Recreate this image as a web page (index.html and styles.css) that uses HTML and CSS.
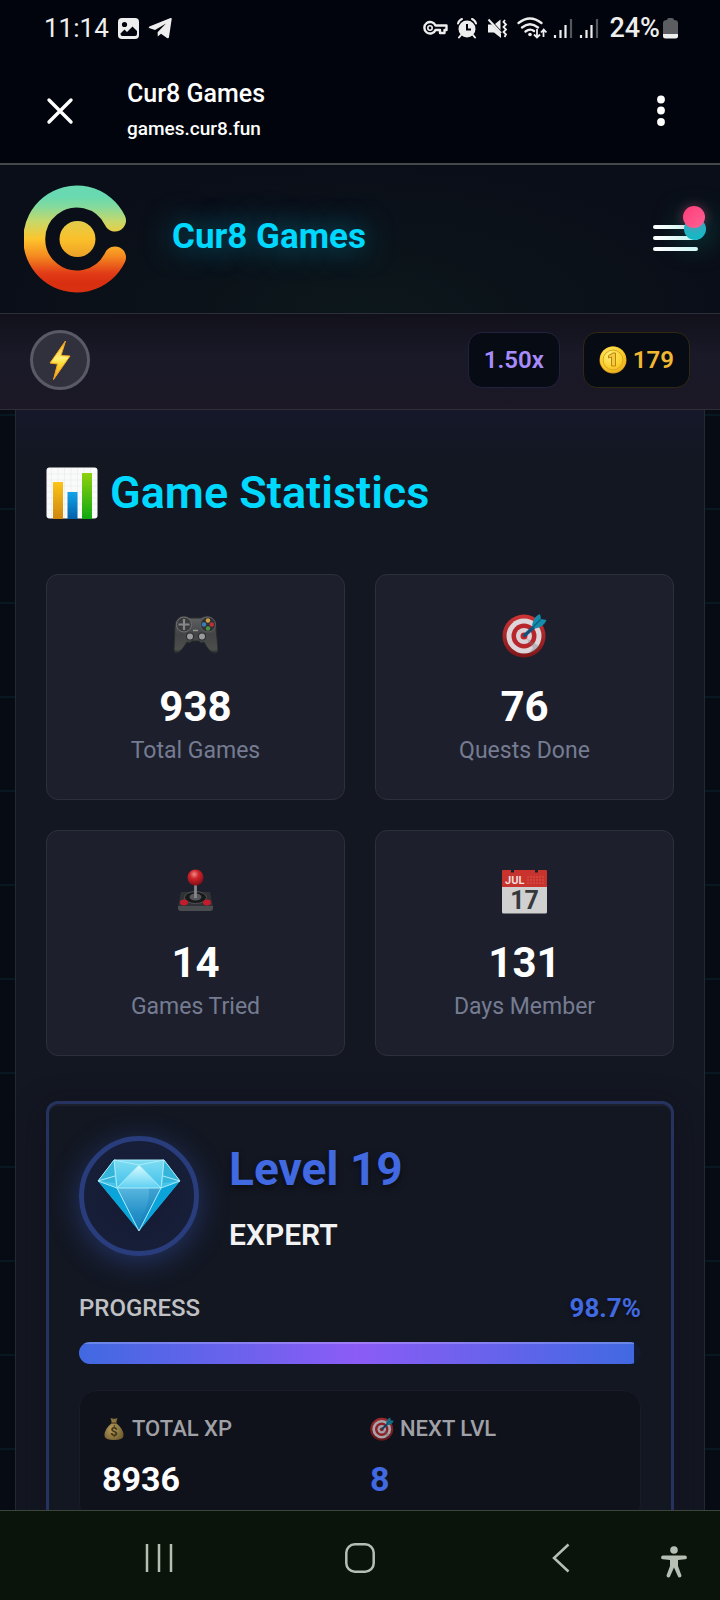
FILE: index.html
```html
<!DOCTYPE html>
<html lang="en">
<head>
<meta charset="utf-8">
<meta name="viewport" content="width=device-width, initial-scale=1">
<title>Cur8 Games</title>
<link rel="stylesheet" href="styles.css">
</head>
<body>
<svg class="defs" width="0" height="0" aria-hidden="true">
  <defs>
    <linearGradient id="logoG" x1="0" y1="0" x2="0" y2="1"><stop offset="0" stop-color="#68d9b0"/><stop offset=".12" stop-color="#84da9c"/><stop offset=".3" stop-color="#c9d868"/><stop offset=".5" stop-color="#fdc52c"/><stop offset=".7" stop-color="#f58a20"/><stop offset=".9" stop-color="#e23c17"/><stop offset="1" stop-color="#d93012"/></linearGradient>
    <linearGradient id="dotG" x1="0" y1="0" x2="0" y2="1"><stop offset="0" stop-color="#e2cc4c"/><stop offset=".5" stop-color="#fbc02a"/><stop offset="1" stop-color="#eda128"/></linearGradient>
    <linearGradient id="boltG" x1="0" y1="0" x2="0" y2="1"><stop offset="0" stop-color="#f9b424"/><stop offset=".45" stop-color="#fff176"/><stop offset=".6" stop-color="#fdd835"/><stop offset="1" stop-color="#f59a1c"/></linearGradient>
    <linearGradient id="yellowG" x1="0" y1="0" x2="0" y2="1"><stop offset="0" stop-color="#fcc417"/><stop offset="1" stop-color="#d0850e"/></linearGradient>
    <linearGradient id="blueG" x1="0" y1="0" x2="0" y2="1"><stop offset="0" stop-color="#12a4ea"/><stop offset="1" stop-color="#045fa8"/></linearGradient>
    <linearGradient id="greenG" x1="0" y1="0" x2="0" y2="1"><stop offset="0" stop-color="#8fd010"/><stop offset="1" stop-color="#10a810"/></linearGradient>
    <linearGradient id="padG" x1="0" y1="0" x2="0" y2="1"><stop offset="0" stop-color="#626364"/><stop offset=".5" stop-color="#434445"/><stop offset=".9" stop-color="#4c4e4c"/><stop offset="1" stop-color="#252628"/></linearGradient>
    <linearGradient id="redG" x1="0" y1="0" x2="0" y2="1"><stop offset="0" stop-color="#cf3434"/><stop offset="1" stop-color="#80161a"/></linearGradient>
    <radialGradient id="ballG" cx=".42" cy=".3" r=".7"><stop offset="0" stop-color="#ef8a86"/><stop offset=".4" stop-color="#cf2429"/><stop offset="1" stop-color="#820d18"/></radialGradient>
    <radialGradient id="coinG" cx=".4" cy=".35" r=".75"><stop offset="0" stop-color="#fff27a"/><stop offset=".6" stop-color="#fbcf2c"/><stop offset="1" stop-color="#e9a81c"/></radialGradient>
    <radialGradient id="bagG" cx=".4" cy=".5" r=".7"><stop offset="0" stop-color="#b39e62"/><stop offset="1" stop-color="#6b5526"/></radialGradient>
    <linearGradient id="gemG" x1="0" y1="0" x2="0" y2="1"><stop offset="0" stop-color="#7fdcf2"/><stop offset=".4" stop-color="#3fc0ea"/><stop offset="1" stop-color="#0a86c4"/></linearGradient>
    <linearGradient id="gemC" x1="0" y1="0" x2="0" y2="1"><stop offset="0" stop-color="#58b6de"/><stop offset=".6" stop-color="#2490c8"/><stop offset="1" stop-color="#157fba"/></linearGradient>
    <linearGradient id="gemT" x1="0" y1="0" x2="0" y2="1"><stop offset="0" stop-color="#d8fbff"/><stop offset="1" stop-color="#5fd0f2"/></linearGradient>
    <symbol id="target" viewBox="0 0 45 45">
      <circle cx="22" cy="23" r="21.5" fill="url(#redG)"/><circle cx="22" cy="23" r="17.5" fill="#dcd6da"/><circle cx="22" cy="23" r="12.5" fill="#b8262c"/><circle cx="22" cy="23" r="8" fill="#d8d2d6"/><circle cx="22" cy="23" r="3.5" fill="#cf2022"/>
      <path d="M24 25 31 35 27 40Q34 39 37 33Z" fill="#777b80" opacity=".35"/>
      <path d="M22.500 22.500 32 14" stroke="#10527e" stroke-width="3.600" stroke-linecap="round"/>
      <path d="M30 12Q32 3 38 1L39 6 44.500 7Q42 14 33 15.500Z" fill="#168cab"/><path d="M30 15 39 6" stroke="#0b5f86" stroke-width="1.500"/>
    </symbol>
    <symbol id="signal" viewBox="0 0 20 22"><path d="M2 18v3M7.500 13v8M12.500 8v13" stroke="#eee" stroke-width="2.200"/><path d="M18 2v19" stroke="#55575b" stroke-width="2.200"/></symbol>
  </defs>
</svg>

<div class="status">
  <div class="status-left">
    <span class="clock">11:14</span>
    <svg width="21" height="21" viewBox="0 0 21 21"><rect width="21" height="21" rx="4" fill="#eee"/><circle cx="6.500" cy="6.500" r="2.600" fill="#01040c"/><path d="M2.500 15.500 6.500 11.500 9 14 14.500 8.500 19 13v3q0 2-2 2H4.500q-2 0-2-2Z" fill="#01040c"/></svg>
    <svg width="24" height="22" viewBox="0 0 24 22"><path d="M1 11Q0 10 2 9.300L22.500 1Q24 .5 23.700 2L21 20Q20.700 22 19 21L13 16.800 9.800 19.500 9.600 15.200 18 6.500 7 13Z" fill="#eee"/></svg>
  </div>
  <div class="status-right">
    <svg class="key" width="25" height="16" viewBox="0 0 25 16"><path d="M12.500 5.500H23.500V10H21.500V13H17V10H12.500A5.800 5.800 0 1 1 12.500 5.500Z" fill="none" stroke="#eee" stroke-width="2.400" stroke-linejoin="round"/><circle cx="7" cy="8" r="2.200" fill="none" stroke="#eee" stroke-width="1.600"/></svg>
    <svg class="alarm" width="20" height="21" viewBox="0 0 20 21"><circle cx="10" cy="11" r="8.500" fill="#eee"/><path d="M10 6v5.500H14" stroke="#01040c" stroke-width="2" fill="none"/><path d="M1 5.500Q2 2 5 1M19 5.500Q18 2 15 1M4 17 2 19.500M16 17 18 19.500" stroke="#eee" stroke-width="2" fill="none" stroke-linecap="round"/></svg>
    <svg class="mute" width="21" height="21" viewBox="0 0 21 21"><path d="M1 6.500H5L14 16V20L7 14.500H1ZM8 6 13.500 1.500V12Z" fill="#eee"/><path d="M1.500 1.500 14 15" stroke="#eee" stroke-width="2"/><path d="M18 2l-1.500 2L19 6.500 16.500 9 19 11.500 16.500 14 19 16.500 17.500 19" stroke="#eee" stroke-width="1.800" fill="none"/></svg>
    <svg width="30" height="22" viewBox="0 0 30 22"><g fill="none" stroke="#eee" stroke-width="2.300" stroke-linecap="round"><path d="M1.500 6Q13 -3 24.500 6M5 10.500Q13 4 21 10.500M8.500 14.500Q13 11 17 14"/></g><circle cx="13" cy="17.500" r="1.800" fill="#eee"/><path d="M20 12v8M17 17.500l3 3 3-3M26.500 20v-7M24 15.500l2.700-3 2.700 3" stroke="#eee" stroke-width="1.800" fill="none"/></svg>
    <svg class="sig" width="20" height="22"><use href="#signal"/></svg>
    <svg class="sig" width="20" height="22"><use href="#signal"/></svg>
    <span class="battery-text">24%</span>
    <svg width="15" height="22" viewBox="0 0 15 22"><path d="M4 3Q4 1 6 1H9Q11 1 11 3Q15 3 15 6V17H0V6Q0 3 4 3Z" fill="#5b5d60"/><path d="M0 17H15V19Q15 21.500 12.500 21.500H2.500Q0 21.500 0 19Z" fill="#eee"/></svg>
  </div>
</div>

<div class="appbar">
  <button class="icon-btn" aria-label="Close"><svg width="28" height="28" viewBox="0 0 28 28"><path d="M3 3 25 25M25 3 3 25" stroke="#fff" stroke-width="3.400" stroke-linecap="round"/></svg></button>
  <div class="page-id"><div class="page-title">Cur8 Games</div><div class="page-url">games.cur8.fun</div></div>
  <button class="icon-btn" aria-label="More options"><svg width="8" height="32" viewBox="0 0 8 32"><g fill="#fff"><circle cx="4" cy="4.500" r="3.900"/><circle cx="4" cy="15.500" r="3.900"/><circle cx="4" cy="27" r="3.900"/></g></svg></button>
</div>

<header class="site-header">
  <svg class="logo" width="106" height="108" viewBox="-1 0 106 108"><path d="M90 35.500A42.500 42.500 0 1 0 90 72.500" fill="none" stroke="url(#logoG)" stroke-width="22" stroke-linecap="round"/><circle cx="52.500" cy="54" r="18" fill="url(#dotG)"/></svg>
  <h1 class="brand">Cur8 Games</h1>
  <button class="menu" aria-label="Menu"><span class="line"></span><span class="line"></span><span class="line"></span><span class="dot teal"></span><span class="dot pink"></span></button>
</header>

<div class="player-bar">
  <button class="energy" aria-label="Energy"><svg width="22" height="40" viewBox="0 0 22 40"><path d="M16.500 1 1 23 8.500 24 4.500 39.500 21 16 12 15.500Z" fill="url(#boltG)" stroke="#f5a623" stroke-width="1" stroke-linejoin="round"/></svg></button>
  <div class="pills">
    <span class="pill multi">1.50x</span>
    <span class="pill coins"><svg width="28" height="28" viewBox="0 0 28 28"><circle cx="14" cy="14" r="13.500" fill="#d99b20"/><circle cx="14" cy="13.500" r="13" fill="url(#coinG)"/><circle cx="14" cy="14" r="10" fill="none" stroke="#dba522" stroke-width="1"/><path d="M9.500 9.500 14 7H16.500V20H12.500V11L9.500 12Z" fill="#f5c93a" stroke="#b98512" stroke-width="1"/></svg>179</span>
  </div>
</div>

<div class="backdrop">
<main class="panel">
  <h2 class="heading">
    <svg width="52" height="52" viewBox="0 0 52 52"><rect x=".5" y=".5" width="51" height="51" rx="3" fill="#fafafa"/><path d="M5.500 1v50M12 1v50M18.500 1v50M25 1v50M31.500 1v50M38 1v50M44.500 1v50M1 7h50M1 13h50M1 19h50M1 25h50M1 31h50M1 37h50M1 43h50" stroke="#e9ebec" stroke-width=".7"/><path d="M7 15h10v37H7Z" fill="url(#yellowG)"/><path d="M21.500 25h10v27h-10Z" fill="url(#blueG)"/><path d="M36 6h10v46H36Z" fill="url(#greenG)"/></svg>
    Game Statistics
  </h2>

  <section class="stats">
    <article class="stat">
      <svg class="stat-icon" viewBox="0 0 45 45"><path d="M7 4Q12 2 17 5H28Q34 1 39 5Q43 7 43 15L45 36Q45 41 41 40Q36 39 31 29Q28 31 26 28H19Q17 31 14 29Q8 39 4 40Q1 41 1 36L2 14Q2 7 7 4Z" fill="url(#padG)" stroke="#292b2d"/><circle cx="11" cy="11.500" r="7.500" fill="#3b3c3e" stroke="#717273"/><path d="M11 6v11M5.500 11.500h11" stroke="#85878a" stroke-width="2.200"/><circle cx="35" cy="11.500" r="7.500" fill="#303134" stroke="#5d5e60"/><circle cx="35" cy="7.500" r="2.200" fill="#d1a044"/><circle cx="31" cy="11.500" r="2.200" fill="#387fb8"/><circle cx="38.800" cy="11.500" r="2.200" fill="#bf3038"/><circle cx="35" cy="15.500" r="2.200" fill="#4d9143"/><circle cx="17" cy="23.500" r="4" fill="#2c2d2f"/><circle cx="29" cy="23.500" r="4" fill="#2c2d2f"/><circle cx="17" cy="23.500" r="3" fill="#999b9d"/><circle cx="29" cy="23.500" r="3" fill="#999b9d"/><path d="M20 17.500h5" stroke="#999" stroke-width="1.400"/></svg>
      <strong class="stat-value">938</strong><span class="stat-label">Total Games</span>
    </article>
    <article class="stat">
      <svg class="stat-icon" viewBox="0 0 45 45"><use href="#target"/></svg>
      <strong class="stat-value">76</strong><span class="stat-label">Quests Done</span>
    </article>
    <article class="stat">
      <svg class="stat-icon" viewBox="0 0 45 45"><path d="M8 23H37L40 38Q40 42 37 42H8Q5 42 5 38Z" fill="#303236"/><path d="M5 37H40V39Q40 42 37 42H8Q5 42 5 39Z" fill="#4a4d50"/><ellipse cx="22.500" cy="28.500" rx="11" ry="6" fill="#17191b" stroke="#505256"/><ellipse cx="22.500" cy="28" rx="6" ry="3.500" fill="#55575a"/><path d="M22.500 14v15" stroke="#85878a" stroke-width="2.800"/><circle cx="22.500" cy="8.500" r="8" fill="url(#ballG)"/><ellipse cx="11" cy="33.500" rx="4" ry="3" fill="#c31c2c"/><ellipse cx="34" cy="33.500" rx="4" ry="3" fill="#c31c2c"/></svg>
      <strong class="stat-value">14</strong><span class="stat-label">Games Tried</span>
    </article>
    <article class="stat">
      <svg class="stat-icon" viewBox="0 0 45 45"><path d="M0 2Q0 1 1 1H9V3.500H12V1H33V3.500H36V1H44Q45 1 45 2V18H0Z" fill="#c8332d"/><path d="M0 18H45V43Q45 44.500 43.500 44.500H1.500Q0 44.500 0 43Z" fill="#d0d0d1"/><path d="M25 8h17M25 11h17M25 14h17" stroke="#d9554d" stroke-width="1.200" stroke-dasharray="2 1"/><text class="cal-month" x="3" y="15">JUL</text><text class="cal-day" x="22.500" y="40">17</text></svg>
      <strong class="stat-value">131</strong><span class="stat-label">Days Member</span>
    </article>
  </section>

  <section class="level">
    <div class="level-head">
      <div class="gem"><svg width="84" height="74" viewBox="0 0 84 74"><path d="M17 1H67L83 22 42 72 1 22Z" fill="url(#gemG)"/><path d="M1 22 20 29 42 72ZM83 22 64 29 42 72Z" fill="#0ba4da"/><path d="M20 29H64L42 72Z" fill="url(#gemC)"/><path d="M52 29Q53 45 44 60L42 72 64 29Z" fill="#147fb8" opacity=".35"/><path d="M17 1 18 24 1 22ZM67 1 66 24 83 22Z" fill="#36b5da"/><path d="M42 6 20 29H64Z" fill="url(#gemT)"/><path d="M17 1H67L83 22 64 29H20L1 22ZM17 1 42 6 67 1M42 6 20 29 42 72 64 29 42 6M17 1 20 29M67 1 64 29M1 22 18 17M83 22 66 17" fill="none" stroke="#a9ecfb" stroke-width="1"/></svg></div>
      <div class="level-name"><h3 class="level-title">Level 19</h3><span class="rank">Expert</span></div>
    </div>
    <div class="progress-row"><span class="progress-label" id="plabel">Progress</span><span class="progress-value">98.7%</span></div>
    <div class="track" role="progressbar" aria-labelledby="plabel" aria-valuenow="98.7"><div class="fill" style="width:98.7%"></div></div>
    <dl class="xp">
      <div class="xp-item"><dt class="xp-label"><svg width="24" height="24" viewBox="0 0 24 24"><path d="M8.500 1Q12 2.500 15.500 1L14 6Q22 12 21.500 19Q21 23 12 23T2.500 19Q2 12 10 6Z" fill="url(#bagG)"/><path d="M9 6h6" stroke="#5b4620" stroke-width="1.500"/><text class="bag-sign" x="12" y="19">$</text></svg>Total XP</dt><dd class="xp-value">8936</dd></div>
      <div class="xp-item"><dt class="xp-label"><svg class="dim" width="24" height="24"><use href="#target"/></svg>Next Lvl</dt><dd class="xp-value accent">8</dd></div>
    </dl>
  </section>
</main>
</div>

<nav class="sysnav" aria-label="System">
  <button class="nav-btn recents" aria-label="Recents"><svg width="28" height="30" viewBox="0 0 28 30"><path d="M2 1v28M14 1v28M26 1v28" stroke="#b7beb4" stroke-width="2.500"/></svg></button>
  <button class="nav-btn" aria-label="Home"><svg width="30" height="30" viewBox="0 0 30 30"><rect x="1.300" y="1.300" width="27.400" height="27.400" rx="8.500" fill="none" stroke="#b7beb4" stroke-width="2.500"/></svg></button>
  <button class="nav-btn" aria-label="Back"><svg width="18" height="30" viewBox="0 0 18 30"><path d="M16.500 1.500 2 15 16.500 28.500" fill="none" stroke="#b7beb4" stroke-width="2.500"/></svg></button>
  <button class="nav-btn access" aria-label="Accessibility"><svg width="26" height="32" viewBox="0 0 26 32"><circle cx="13" cy="4" r="3.800" fill="#b7beb4"/><path d="M2 9.500H24A1.900 1.900 0 0 1 24 13.300L17 14V20L20.500 29.500Q20.500 31.500 18.500 31.500Q17.500 31.500 17 30.500L13 21.500 9 30.500Q8.500 31.500 7.500 31.500Q5.500 31.500 5.500 29.500L9 20V14L2 13.300A1.900 1.900 0 0 1 2 9.500Z" fill="#b7beb4"/></svg></button>
</nav>
</body>
</html>
```
FILE: styles.css
```css
* { box-sizing: border-box; }

body {
  margin: 0;
  height: 100vh;
  display: flex;
  flex-direction: column;
  overflow: hidden;
  background: #01040c;
  color: #fff;
  font-family: Roboto, "Liberation Sans", sans-serif;
}

button {
  padding: 0;
  border: 0;
  background: none;
  color: inherit;
  font: inherit;
}

svg { display: block; flex: none; }
.defs { position: absolute; }
h1, h2, h3, dl, dd { margin: 0; }

.status, .appbar, .site-header, .player-bar, .sysnav { flex: none; }

.status {
  display: flex;
  justify-content: space-between;
  align-items: center;
  padding: 12px 42px 12px 44px;
  color: #eee;
  line-height: 32px;
}
.status-left { display: flex; align-items: center; gap: 9px; }
.clock { font-size: 26px; }
.status-right { display: flex; align-items: center; gap: 6px; }
.key, .mute { margin-right: 3px; }
.alarm { margin-right: 4px; }
.battery-text { font-size: 27px; font-weight: 500; }
.sig + .sig { margin-right: 4px; }
.status-right > :last-child { margin-left: -3px; }

.appbar {
  display: flex;
  align-items: center;
  padding: 20px 55px 18px 46px;
  border-bottom: 2px solid #45484b;
}
.page-id { flex: 1; margin-left: 53px; padding-top: 2px; }
.page-title { font-size: 25px; line-height: 32px; font-weight: 500; }
.page-url { margin-top: 2px; font-size: 19px; line-height: 33px; font-weight: 500; }

.site-header {
  display: flex;
  align-items: center;
  padding: 20px 22px 20px 24px;
  border-bottom: 1px solid #2c2f39;
  background: radial-gradient(ellipse at 50% 100%, #0c171b, #0a0e18 70%);
}
.brand {
  flex: 1;
  margin-left: 42px;
  padding-bottom: 5px;
  color: #00d9ff;
  font-size: 35px;
  line-height: 44px;
  font-weight: 700;
  text-shadow: 0 0 30px rgba(0, 217, 255, 0.5);
}
.menu { position: relative; display: grid; gap: 7px; width: 45px; margin-bottom: 2px; }
.line { height: 4px; border-radius: 2px; background: linear-gradient(90deg, #fff, #e2fbfb); }
.dot { position: absolute; width: 22px; height: 22px; border-radius: 50%; }
.teal { top: -7px; right: -8px; background: #18b8c6; box-shadow: 0 0 30px rgba(0, 200, 170, 0.6); }
.pink { top: -19px; right: -7px; background: linear-gradient(135deg, #ff3d79, #ff6295); box-shadow: 0 0 12px rgba(255, 70, 125, 0.4); }

.player-bar {
  display: flex;
  align-items: center;
  justify-content: space-between;
  padding: 16px 30px 19px;
  border-bottom: 1px solid #2f2d3a;
  background: linear-gradient(180deg, #12111b, #191928 45%, #1c1825);
}
.energy {
  display: grid;
  place-items: center;
  width: 60px;
  height: 60px;
  border: 3px solid #5a5a66;
  border-radius: 50%;
  background: #30313c;
}
.pills { display: flex; gap: 23px; }
.pill {
  display: flex;
  align-items: center;
  gap: 6px;
  padding: 12px 15px;
  border: 1px solid;
  border-radius: 14px;
  background: #070b14;
  font-size: 24px;
  line-height: 30px;
  font-weight: 600;
}
.multi { border-color: #24213e; color: #a78bfa; }
.coins { border-color: #30290f; color: #f0b732; }

.backdrop {
  flex: 1;
  min-height: 0;
  padding: 0 15px;
  overflow: hidden;
  background: repeating-linear-gradient(180deg, #070b14 0 4px, #081820 4px 6px, #070b14 6px 94px);
}
.panel {
  padding: 46px 30px;
  border: solid #242935;
  border-width: 0 1px;
  background: linear-gradient(180deg, #151829, #131722 50px, #131722);
}
.heading {
  display: flex;
  align-items: center;
  gap: 12px;
  color: #00d9ff;
  font-size: 45px;
  line-height: 74px;
  font-weight: 600;
}

.stats {
  display: grid;
  grid-template-columns: 1fr 1fr;
  gap: 30px;
  margin-top: 44px;
}
.stat {
  display: flex;
  flex-direction: column;
  align-items: center;
  padding: 38px 20px 32px;
  border: 1px solid #2c303b;
  border-radius: 12px;
  background: #1d202c;
}
.stat-icon { width: 45px; height: 45px; }
.stat-value { margin-top: 24px; font-size: 42px; line-height: 50px; font-weight: 700; }
.stat-label { margin-top: 3px; color: #757c92; font-size: 23px; line-height: 32px; }
.cal-month { fill: #f2dddb; font-size: 11px; font-weight: 700; }
.cal-day { fill: #36393b; font-size: 25px; font-weight: 700; text-anchor: middle; }

.level {
  margin-top: 45px;
  padding: 32px 30px;
  border: 3px solid #26335f;
  border-radius: 12px;
  background: #131722;
  box-shadow: inset 0 2px #1c202c, 0 8px 30px rgba(17, 14, 26, 0.6);
}
.level-head { display: flex; align-items: center; gap: 30px; }
.gem {
  display: grid;
  place-items: center;
  width: 120px;
  height: 120px;
  border: 5px solid #293d7d;
  border-radius: 50%;
  background: radial-gradient(#151a31, #18203b);
  box-shadow: 0 6px 30px rgba(65, 105, 225, 0.35);
}
.level-title {
  color: #4169e1;
  font-size: 46px;
  line-height: 64px;
  font-weight: 700;
  text-shadow: 0 3px 6px rgba(0, 0, 0, 0.5);
}
.level-name { padding-bottom: 2px; }
.rank {
  display: block;
  margin-top: 16px;
  color: #f2f2f3;
  font-size: 30px;
  line-height: 36px;
  font-weight: 600;
  text-transform: uppercase;
}
.progress-row {
  display: flex;
  justify-content: space-between;
  align-items: center;
  margin-top: 34px;
  line-height: 36px;
}
.progress-label { color: #c0c1c5; font-size: 24px; font-weight: 500; text-transform: uppercase; }
.progress-value { color: #4169e1; font-size: 26px; font-weight: 700; text-shadow: 0 2px 4px rgba(0, 0, 0, 0.5); }
.track {
  height: 22px;
  margin-top: 16px;
  border-radius: 11px;
  overflow: hidden;
  background: #141a30;
}
.fill {
  height: 100%;
  background: linear-gradient(90deg, #4169e1, #8b5cf6 50%, #4169e1);
  box-shadow: inset 0 2px rgba(255, 255, 255, 0.2);
}
.xp {
  display: grid;
  grid-template-columns: 1fr 1fr;
  gap: 20px;
  margin-top: 26px;
  padding: 22px;
  border: 1px solid #191c26;
  border-radius: 18px;
  background: #0f111b;
}
.xp-label {
  display: flex;
  align-items: center;
  gap: 6px;
  color: #a0a1a6;
  font-size: 22px;
  line-height: 32px;
  font-weight: 500;
  text-transform: uppercase;
}
.xp-value { margin-top: 14px; font-size: 34px; line-height: 40px; font-weight: 700; }
.accent { color: #4169e1; }
.dim { opacity: 0.75; }
.bag-sign { fill: #453511; font-size: 13px; font-weight: 700; text-anchor: middle; }

.sysnav {
  display: grid;
  grid-template-columns: 58fr 201fr 201fr 201fr 59fr;
  align-items: start;
  padding: 32px 0 22px;
  border-top: 1px solid #3b4539;
  background: #0a140a;
}
.nav-btn { display: grid; place-items: center; }
.recents { grid-column: 2; }
.access { justify-items: start; padding-top: 3px; }
```
